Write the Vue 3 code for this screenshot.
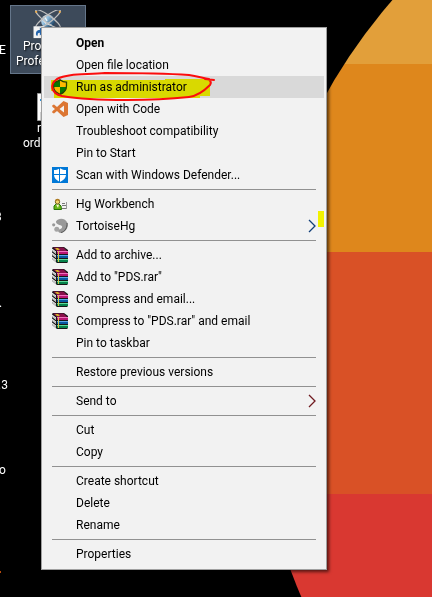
<script setup>
const groups = [
  [
    { label: 'Open', bold: true },
    { label: 'Open file location' },
    { label: 'Run as administrator', icon: 'shield', active: true },
    { label: 'Open with Code', icon: 'code' },
    { label: 'Troubleshoot compatibility' },
    { label: 'Pin to Start' },
    { label: 'Scan with Windows Defender...', icon: 'defender' },
  ],
  [
    { label: 'Hg Workbench', icon: 'workbench' },
    { label: 'TortoiseHg', icon: 'tortoise', submenu: 'blue' },
  ],
  [
    { label: 'Add to archive...', icon: 'rar' },
    { label: 'Add to "PDS.rar"', icon: 'rar' },
    { label: 'Compress and email...', icon: 'rar' },
    { label: 'Compress to "PDS.rar" and email', icon: 'rar' },
    { label: 'Pin to taskbar' },
  ],
  [{ label: 'Restore previous versions' }],
  [{ label: 'Send to', submenu: 'red' }],
  [{ label: 'Cut' }, { label: 'Copy' }],
  [{ label: 'Create shortcut' }, { label: 'Delete' }, { label: 'Rename' }],
  [{ label: 'Properties' }],
]
</script>

<template>
  <main class="desktop">
    <svg class="wallpaper" width="432" height="597" viewBox="0 0 432 597" aria-hidden="true">
      <defs>
        <clipPath id="disc"><circle cx="819" cy="370.5" r="565" /></clipPath>
      </defs>
      <g clip-path="url(#disc)">
        <rect x="240" y="-200" width="1200" height="264" fill="#e29f3a" />
        <rect x="240" y="64" width="1200" height="188" fill="#de871c" />
        <rect x="240" y="252" width="1200" height="242" fill="#d95126" />
        <rect x="240" y="494" width="1200" height="500" fill="#d93831" />
      </g>
    </svg>

    <div class="shortcut selected">
      <svg width="32" height="32" viewBox="0 0 32 32" aria-hidden="true">
        <defs>
          <linearGradient id="globe" x1="0" y1="0" x2="1" y2=".7">
            <stop offset="0" stop-color="#f0f5f8" /><stop offset=".45" stop-color="#8dbbdc" /><stop offset="1" stop-color="#153a5c" />
          </linearGradient>
        </defs>
        <circle cx="16" cy="12.500" r="7.500" fill="url(#globe)" />
        <path d="M10 10l4 5M12 7l3 5M15 15l5 2" fill="none" stroke="#eef5f8" stroke-width="1.500" />
        <g fill="none" stroke="#bfbfbf" stroke-width="1.400">
          <ellipse cx="16" cy="10" rx="16.500" ry="4" transform="rotate(36 16 10)" />
          <ellipse cx="16" cy="10" rx="16.500" ry="4" transform="rotate(-36 16 10)" />
        </g>
        <path d="M2 1h2v2H2zM28 1h2v2h-2z" fill="#f2a93c" />
        <rect y="18" width="12" height="13" fill="#f4f4f4" />
        <path d="M3 28c-1-4 1-6 4-6v-3l5 5-5 4v-3c-2 0-3 1-2 3z" fill="#2465ad" />
      </svg>
      <span>Pro</span>
      <span>Profe</span>
    </div>
    <div class="shortcut document">
      <svg width="12" height="28" viewBox="0 0 12 28" aria-hidden="true">
        <path d="M.5.5H12V27.500H.5z" fill="#fff" stroke="#999" />
        <path d="M3 7h2" fill="none" stroke="#2b95de" stroke-width="2" />
        <path d="M3 19h9v8H3z" fill="#d5d5d5" />
      </svg>
      <span>r</span>
      <span>ord</span>
    </div>
    <span class="clipped name-e">E</span>
    <span class="clipped name-a">3</span>
    <span class="clipped name-b">.</span>
    <span class="clipped name-c">.3</span>
    <span class="clipped name-d">o</span>
    <i class="speck"></i>

    <svg class="symbols" width="0" height="0" aria-hidden="true">
      <symbol id="shield" viewBox="0 0 16 16">
        <path d="M8 .5C6 2.200 4 3 1.500 3v4c0 4 2.500 7 6.500 8.700C12 14 14.500 11 14.500 7V3C12 3 10 2.200 8 .5z" fill="#ffb900" />
        <path d="M8 .5V8H1.500V3C4 3 6 2.200 8 .5zM8 8h6.400c-.3 3.500-2.600 6-6.400 7.700z" fill="#08783a" />
        <path d="M8 .8C6 2.500 4 3.200 1.500 3.200V7c0 4 2.500 6.800 6.500 8.300C12 13.800 14.500 11 14.500 7V3.200C12 3.200 10 2.500 8 .8z" fill="none" stroke="#27423a" stroke-width="1.300" />
      </symbol>
      <symbol id="code" viewBox="0 0 16 16">
        <path fill-rule="evenodd" d="M11.500 0L16 2v12l-4.500 2L5 10 2 12.500.3 11.700v-1.500L3 8 .3 5.800V4.300L2 3.500 5 6zM12 4.500L7.500 8l4.500 3.500z" fill="#dc7633" />
      </symbol>
      <symbol id="defender" viewBox="0 0 16 16">
        <path d="M0 0h16v16H0z" fill="#0078d7" />
        <path d="M8 1.200C6 2.500 4 3 2 3v4.500c0 3.500 2.500 5.800 6 7.500 3.500-1.700 6-4 6-7.500V3c-2 0-4-.5-6-1.800z" fill="#fff" />
        <path d="M7.500 1v14M2 7.500h12" stroke="#0078d7" />
      </symbol>
      <symbol id="workbench" viewBox="0 0 16 16">
        <path d="M2 13.500V10l2-2h3l2 2 .5 3.500z" fill="#69b817" stroke="#267307" />
        <path d="M4 8.500l2 3.500 1-3.500z" fill="#fff7d5" />
        <circle cx="5.500" cy="5.800" r="2.200" fill="#f3d36a" stroke="#79621e" />
        <path d="M3 5c0-3 5-3 5 0-2-1-3-1-5 0z" fill="#ae7b22" />
        <path d="M10 7.500h3M10 9.500h4M10 12.500h5" stroke="#777" />
        <path d="M14.500 6v7" stroke="#999" />
      </symbol>
      <symbol id="tortoise" viewBox="0 0 16 16">
        <path d="M4 3.500C6-.5 13.500-.5 15.500 5c1.400 5-2.500 10-6.800 10-2.400 0-3.400-2.300-1.600-3.500 2-.8 3.300-1.300 3-3C9.800 7.300 7.500 7.200 6.200 6.600 5.200 6 3.800 5 4 3.500z" fill="#999" />
        <path d="M15 5c.6 4-2 8.800-6 9.500" fill="none" stroke="#565656" />
        <circle cx="4.800" cy="11.300" r="2.500" fill="#a5a5a5" />
        <circle cx="1.700" cy="6.800" r="1.600" fill="#999" />
      </symbol>
      <symbol id="rar" viewBox="0 0 16 16">
        <path d="M1 0h11l4 3v12l-1 1H5l-5-4V1z" fill="#171717" />
        <path d="M1 .5h10.500L15 4H5z" fill="#88104b" />
        <path d="M5 4h11v1H5z" fill="#f070bf" /><path d="M5 5h11v2H5z" fill="#b81672" />
        <path d="M5 8h11v1H5z" fill="#58a7e8" /><path d="M5 9h11v2H5z" fill="#0857a0" />
        <path d="M5 12h11v1H5z" fill="#5bdb9b" /><path d="M5 13h11v2H5z" fill="#07824b" />
        <path d="M0 1.500l4 3V7L0 4zM0 5.500l4 3V11L0 8zM0 9.500l4 3V15l-4-3z" fill="#f8f8f8" />
        <path d="M0 3l4 3M0 7l4 3M0 11l4 3" stroke="#777" stroke-width=".6" />
        <path d="M3 1h3l2 2H5z" fill="#d5b328" /><path d="M6 4h1v11H6z" fill="#d7c44a" />
      </symbol>
    </svg>

    <nav class="menu" aria-label="Shortcut actions">
      <ul v-for="(group, g) in groups" :key="g" class="group">
        <li v-for="item in group" :key="item.label">
          <button type="button" class="item" :class="{ bold: item.bold, active: item.active }">
            <span class="icon">
              <svg v-if="item.icon" width="16" height="16" aria-hidden="true"><use :href="'#' + item.icon" /></svg>
            </span>
            <span class="label">{{ item.label }}</span>
            <svg v-if="item.submenu" class="arrow" :class="item.submenu" width="8" height="14" viewBox="0 0 8 14" aria-hidden="true">
              <path d="M1 1l6 6-6 6" />
            </svg>
          </button>
        </li>
      </ul>
    </nav>

    <svg class="marker" width="432" height="597" viewBox="0 0 432 597" aria-hidden="true">
      <path d="M51 80H165V79H210V96H200V98H54V91H51zM318 211h6v16h-6z" fill="#ff0" />
    </svg>
    <svg class="pen" width="432" height="597" viewBox="0 0 432 597" aria-hidden="true">
      <path d="M214 80L205 79C210 79 212 82 210 85C204 91 197 96 189 97C170 99 149 100 127 100C105 100 79 99 62 96C50 93 50 84 57 79C68 73 87 75 105 73C132 73 160 73 189 75C197 76 203 78 209 79" />
    </svg>
  </main>
</template>

<style>
body { margin: 0; background: #000; }
</style>

<style scoped>
.desktop {
  position: relative;
  box-sizing: border-box;
  min-height: 100vh;
  padding: 27px 105px 27px 41px;
  overflow: hidden;
  background: #000;
  font: 12px/16px Roboto, "Open Sans", sans-serif;
}
.wallpaper, .marker, .pen { position: absolute; top: 0; left: 0; pointer-events: none; }
.marker { mix-blend-mode: multiply; }
.pen { fill: none; stroke: #fb0d0d; stroke-width: 2; stroke-linecap: round; stroke-linejoin: round; }
.symbols { position: absolute; }
.shortcut {
  position: absolute;
  display: flex;
  flex-direction: column;
  align-items: flex-start;
  color: #fff;
  line-height: 15px;
}
.selected {
  top: 5px;
  left: 10px;
  box-sizing: border-box;
  width: 76px;
  height: 69px;
  padding: 4px 5px;
  border: 1px solid #65768a;
  background: #3d4a5a;
  text-shadow: 1px 1px 2px #000;
}
.selected svg { margin-left: 16px; }
.selected span:first-of-type { margin-left: 7px; }
.document { top: 93px; left: 23px; }
.document svg, .document span:first-of-type { margin-left: 14px; }
.clipped { position: absolute; color: #fff; }
.name-e { top: 42px; left: -1px; }
.name-a { top: 209px; left: -5px; }
.name-b { top: 295px; left: -1px; }
.name-c { top: 377px; left: -2px; }
.name-d { top: 462px; left: -1px; }
.speck { position: absolute; top: 571px; left: 0; width: 1px; height: 2px; background: #b84a0b; }
.menu {
  position: relative;
  box-sizing: border-box;
  padding: 4px 2px;
  border: 1px solid #a0a0a0;
  background: #f2f2f2;
  box-shadow: 2px 2px 3px rgba(0, 0, 0, 0.6);
}
.group { margin: 0; padding: 0; list-style: none; }
.group + .group::before {
  content: "";
  display: block;
  height: 1px;
  margin: 3px 8px;
  background: #919191;
}
.item {
  display: flex;
  align-items: center;
  gap: 8px;
  width: 100%;
  height: 22px;
  padding: 0 8px;
  border: 0;
  background: transparent;
  color: #000;
  font: inherit;
  text-align: left;
  white-space: nowrap;
}
.item:hover, .active { background: #d9d9d9; }
.bold { font-weight: 700; }
.icon { flex: none; width: 16px; height: 16px; }
.icon svg { display: block; }
.label { flex: 1; }
.arrow { fill: none; stroke-width: 1.3; }
.blue { stroke: #123f7a; }
.red { stroke: #701a20; }
</style>
